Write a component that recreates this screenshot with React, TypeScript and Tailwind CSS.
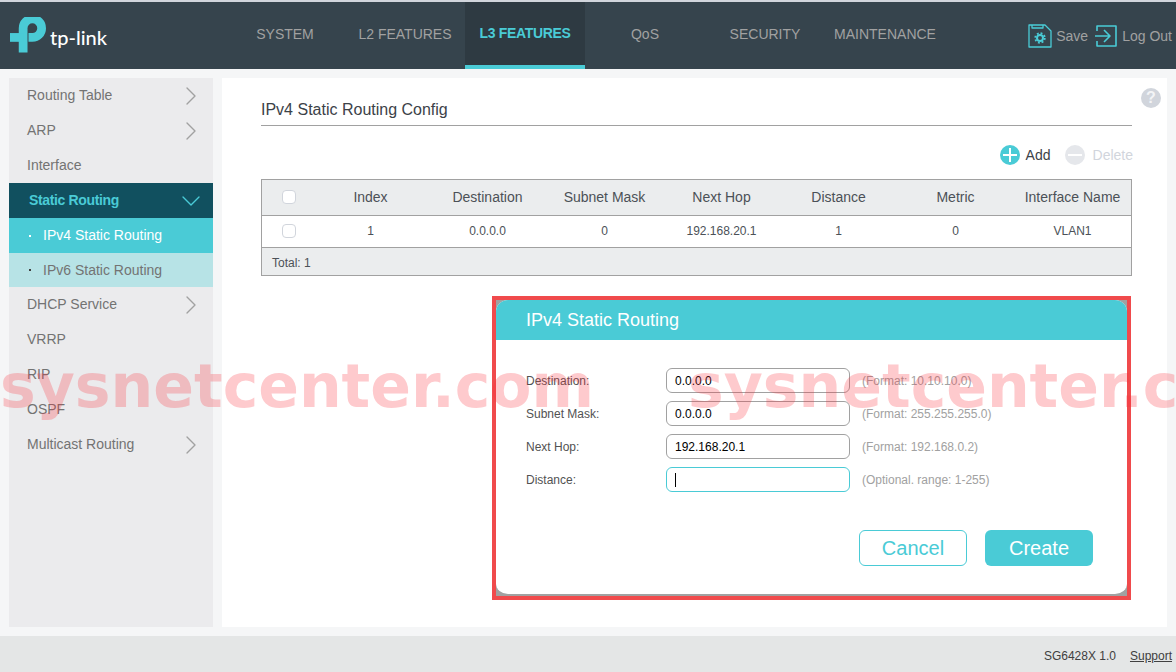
import { ChevronDown, ChevronRight } from "lucide-react";

const navItems = ["SYSTEM", "L2 FEATURES", "L3 FEATURES", "QoS", "SECURITY", "MAINTENANCE"];
const columns = ["Index", "Destination", "Subnet Mask", "Next Hop", "Distance", "Metric", "Interface Name"];
const values = ["1", "0.0.0.0", "0", "192.168.20.1", "1", "0", "VLAN1"];

const fields = [
  { label: "Destination:", value: "0.0.0.0", hint: "(Format: 10.10.10.0)" },
  { label: "Subnet Mask:", value: "0.0.0.0", hint: "(Format: 255.255.255.0)" },
  { label: "Next Hop:", value: "192.168.20.1", hint: "(Format: 192.168.0.2)" },
  { label: "Distance:", value: "", hint: "(Optional. range: 1-255)" },
];

const Logo = () => (
  <div className="flex items-center gap-1">
    <svg viewBox="0 0 37 36" className="w-9 h-9 -mt-0.5 text-[#4acbd6]" fill="none" stroke="currentColor" strokeWidth="9">
      <path d="M13.500 36V11a9.500 9.500 0 1 1 9.500 9.500H19" />
      <path d="M0 20.500h14" />
    </svg>
    <span className="mt-0.5 text-xl text-white font-['Lato',sans-serif] font-medium leading-none">tp-link</span>
  </div>
);

const SaveIcon = () => (
  <svg viewBox="0 0 24 24" className="w-6 h-6 text-[#4acbd6]" fill="none" stroke="currentColor" strokeWidth="1.300" strokeLinejoin="round">
    <path d="M1 1h16l6 6v16H1z" />
    <path d="M4 1v3h11V1" />
    <circle cx="12" cy="14" r="3" strokeWidth="2" />
    <circle cx="12" cy="14" r="4.800" strokeWidth="1.800" strokeDasharray="1.900 1.870" />
  </svg>
);

const LogoutIcon = () => (
  <svg viewBox="0 0 24 24" className="w-6 h-6 text-[#4acbd6]" fill="none" stroke="currentColor" strokeWidth="1.600" strokeLinejoin="round">
    <path d="M3 7V2h19v20H3v-5" />
    <path d="M1 12h15M10 6l6 6-6 6" />
  </svg>
);

const Header = () => (
  <header className="h-[69px] shrink-0 flex bg-[#36444d] border-t-2 border-gray-300">
    <div className="w-56 pl-2.5 flex items-center">
      <Logo />
    </div>
    <nav className="flex ml-px">
      {navItems.map((item) =>
        item === "L3 FEATURES" ? (
          <div key={item} className="w-30 flex items-center justify-center pb-0.5 text-sm font-bold tracking-tight text-[#4acbd6] bg-[#2e3a42] border-b-4 border-[#4acbd6]">
            {item}
          </div>
        ) : (
          <div key={item} className="w-30 flex items-center justify-center pb-1 text-sm text-neutral-400">
            {item}
          </div>
        ),
      )}
    </nav>
    <div className="ml-auto flex items-center gap-1.5 pr-1 text-sm text-neutral-400">
      <div className="flex items-center gap-1">
        <SaveIcon />
        <span>Save</span>
      </div>
      <div className="flex items-center gap-1">
        <LogoutIcon />
        <span>Log Out</span>
      </div>
    </div>
  </header>
);

const SideRow = ({ label, more }: { label: string; more?: boolean }) => (
  <div className="h-[35px] flex items-center justify-between pl-4.5 pr-1.5 text-sm text-neutral-500">
    <span className="pb-0.5">{label}</span>
    {more && <ChevronRight className="w-8 h-8 text-neutral-400" strokeWidth={1} />}
  </div>
);

const Sidebar = () => (
  <aside className="w-51 shrink-0 bg-[#ebebed]">
    <SideRow label="Routing Table" more />
    <SideRow label="ARP" more />
    <SideRow label="Interface" />
    <div className="h-[35px] flex items-center justify-between pl-5 pr-1.5 bg-[#11505f] text-sm font-bold tracking-tight text-[#4acbd6]">
      <span className="pb-0.5">Static Routing</span>
      <ChevronDown className="w-8 h-8 text-[#4acbd6]" strokeWidth={1} />
    </div>
    <div className="h-[35px] flex items-center gap-3 pl-5 bg-[#4acbd6] text-sm text-white">
      <span className="w-0.5 h-0.5 bg-white" />
      <span className="pb-0.5">IPv4 Static Routing</span>
    </div>
    <div className="h-[34px] flex items-center gap-3 pl-5 bg-[#b7e3e6] text-sm text-neutral-500">
      <span className="w-0.5 h-0.5 bg-neutral-700" />
      <span>IPv6 Static Routing</span>
    </div>
    <SideRow label="DHCP Service" more />
    <SideRow label="VRRP" />
    <SideRow label="RIP" />
    <SideRow label="OSPF" />
    <SideRow label="Multicast Routing" more />
  </aside>
);

const Checkbox = () => <span className="w-3.5 h-3.5 rounded-sm border border-gray-300 bg-white" />;

const CircleIcon = ({ plus, className }: { plus?: boolean; className: string }) => (
  <svg viewBox="0 0 20 20" className={`w-5 h-5 ${className}`} stroke="white" strokeWidth="2">
    <circle cx="10" cy="10" r="10" fill="currentColor" stroke="none" />
    <path d="M3 10h14" />
    {plus && <path d="M10 3v14" />}
  </svg>
);

const RouteTable = () => (
  <div className="border border-neutral-400 text-[#4b5157]">
    <div className="h-9 grid grid-cols-[50px_repeat(7,1fr)] items-center pb-0.5 bg-[#ebedee] border-b border-neutral-400 text-sm text-center">
      <div className="flex justify-center pl-1">
        <Checkbox />
      </div>
      {columns.map((col) => (
        <div key={col}>{col}</div>
      ))}
    </div>
    <div className="h-8 grid grid-cols-[50px_repeat(7,1fr)] items-center pb-0.5 border-b border-neutral-400 text-xs text-center">
      <div className="flex justify-center pl-1">
        <Checkbox />
      </div>
      {values.map((val, i) => (
        <div key={i}>{val}</div>
      ))}
    </div>
    <div className="h-[27px] flex items-center px-2.5 pt-0.5 bg-[#ebedee] text-xs">Total: 1</div>
  </div>
);

const RoutingDialog = () => (
  <div className="self-end mt-5 mr-px w-[639px] h-[304px] border-4 border-[#f04a4c] bg-neutral-400">
    <div className="h-full flex flex-col rounded-xl overflow-hidden border-b-2 border-neutral-400 bg-white">
      <div className="h-10 shrink-0 flex items-center pl-7.5 bg-[#4acbd6] text-white text-lg">IPv4 Static Routing</div>
      <div className="flex flex-col gap-2 pl-7.5 pt-7">
        {fields.map((field) => (
          <div key={field.label} className="flex items-center text-xs">
            <span className="w-35 text-neutral-600">{field.label}</span>
            <div
              className={`w-46 h-[25px] flex items-center px-2 rounded-md border text-black ${
                field.value ? "border-neutral-400" : "border-[#4acbd6]"
              }`}
            >
              {field.value || <span className="w-px h-3.5 bg-black" />}
            </div>
            <span className="ml-3 text-neutral-400">{field.hint}</span>
          </div>
        ))}
      </div>
      <div className="mt-auto mb-7 mr-8.5 flex justify-end gap-4.5 text-xl">
        <button className="w-27 h-9 rounded-md border border-[#4acbd6] text-[#4acbd6]">Cancel</button>
        <button className="w-27 h-9 rounded-md bg-[#4acbd6] text-white">Create</button>
      </div>
    </div>
  </div>
);

const Content = () => (
  <main className="relative flex-1 flex flex-col pl-[39px] pr-[35px] pt-4 bg-white">
    <div className="absolute top-2.5 right-1.5 w-5 h-5 rounded-full bg-gray-300 flex items-center justify-center text-base font-bold text-gray-100">?</div>
    <h1 className="h-8 border-b border-neutral-400 text-base text-[#3c4248] pt-1.5 leading-5">IPv4 Static Routing Config</h1>
    <div className="h-[53px] flex items-center justify-end gap-3.5 -mr-px pt-1 text-sm">
      <div className="flex items-center gap-1.5 text-[#3c4248]">
        <CircleIcon plus className="text-[#4acbd6]" />
        <span>Add</span>
      </div>
      <div className="flex items-center gap-2 text-gray-300">
        <CircleIcon className="text-gray-200" />
        <span>Delete</span>
      </div>
    </div>
    <RouteTable />
    <RoutingDialog />
  </main>
);

const Footer = () => (
  <footer className="h-9 shrink-0 flex items-center justify-end gap-3.5 pr-1 pt-1 bg-[#e4e6e6] text-xs text-neutral-700">
    <span>SG6428X 1.0</span>
    <span className="underline">Support</span>
  </footer>
);

const Watermark = ({ className }: { className: string }) => (
  <div className={`absolute top-[356px] pointer-events-none whitespace-nowrap text-6xl font-bold font-['DejaVu_Sans',sans-serif] text-red-500/25 ${className}`}>
    sysnetcenter.com
  </div>
);

export default function App() {
  return (
    <div className="relative h-screen flex flex-col overflow-hidden bg-[#f5f6f7] font-['Liberation_Sans',Arial,sans-serif]">
      <Header />
      <div className="flex-1 flex gap-[9px] p-[9px] min-h-0">
        <Sidebar />
        <Content />
      </div>
      <Footer />
      <Watermark className="left-0" />
      <Watermark className="left-[688px]" />
    </div>
  );
}
